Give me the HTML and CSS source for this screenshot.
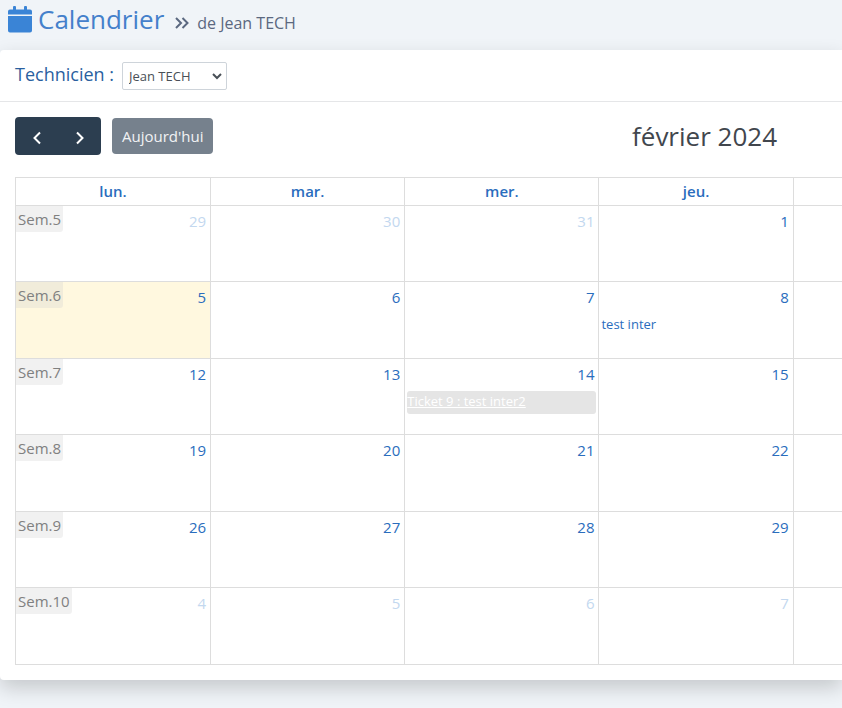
FILE: index.html
```html
<!DOCTYPE html>
<html lang="fr">
<head>
<meta charset="utf-8">
<meta name="viewport" content="width=device-width, initial-scale=1">
<title>Calendrier</title>
<link rel="stylesheet" href="styles.css">
</head>
<body>
<header class="page-header">
  <svg class="page-icon" viewBox="0 0 24 27" aria-hidden="true"><path d="M0 10h24v14.500a2 2 0 0 1-2 2H2a2 2 0 0 1-2-2zM0 8.500V5.500a2 2 0 0 1 2-2h3V1a1 1 0 0 1 1-1h1a1 1 0 0 1 1 1v2.500h8V1a1 1 0 0 1 1-1h1a1 1 0 0 1 1 1v2.500h3a2 2 0 0 1 2 2v3z"/></svg>
  <h1 class="page-title">Calendrier</h1>
  <svg class="page-chevrons" viewBox="0 0 14 12" aria-hidden="true"><path d="M1 1l5 5-5 5M7.500 1l5 5-5 5"/></svg>
  <span class="page-subtitle">de Jean TECH</span>
</header>
<main class="card">
  <form class="filter">
    <label class="filter-label" for="tech">Technicien :</label>
    <span class="select-wrap">
      <select class="filter-select" id="tech"><option>Jean TECH</option></select>
      <svg class="select-arrow" viewBox="0 0 10 7" aria-hidden="true"><path d="M1 1l4 4 4-4"/></svg>
    </span>
  </form>
  <section class="planner">
    <div class="toolbar">
      <div class="nav-group">
        <button class="nav-button" type="button" aria-label="Mois précédent"><svg viewBox="0 0 10 14" aria-hidden="true"><path d="M8 1.500L2.500 7 8 12.500"/></svg></button>
        <button class="nav-button" type="button" aria-label="Mois suivant"><svg viewBox="0 0 10 14" aria-hidden="true"><path d="M2 1.500L7.500 7 2 12.500"/></svg></button>
      </div>
      <button class="today-button" type="button" disabled>Aujourd'hui</button>
      <h2 class="month">février 2024</h2>
    </div>
    <table class="month-grid">
      <thead>
        <tr><th>lun.</th><th>mar.</th><th>mer.</th><th>jeu.</th><td class="rest"></td></tr>
      </thead>
      <tbody>
        <tr class="outside">
          <td><a class="week" href="#">Sem.5</a><a class="day" href="#">29</a></td>
          <td><a class="day" href="#">30</a></td>
          <td><a class="day" href="#">31</a></td>
          <td class="inside"><a class="day" href="#">1</a></td>
          <td class="rest"></td>
        </tr>
        <tr>
          <td class="today"><a class="week" href="#">Sem.6</a><a class="day" href="#">5</a></td>
          <td><a class="day" href="#">6</a></td>
          <td><a class="day" href="#">7</a></td>
          <td><a class="day" href="#">8</a><a class="event" href="#">test inter</a></td>
          <td class="rest"></td>
        </tr>
        <tr>
          <td><a class="week" href="#">Sem.7</a><a class="day" href="#">12</a></td>
          <td><a class="day" href="#">13</a></td>
          <td><a class="day" href="#">14</a><a class="event ticket" href="#">Ticket 9 : test inter2</a></td>
          <td><a class="day" href="#">15</a></td>
          <td class="rest"></td>
        </tr>
        <tr>
          <td><a class="week" href="#">Sem.8</a><a class="day" href="#">19</a></td>
          <td><a class="day" href="#">20</a></td>
          <td><a class="day" href="#">21</a></td>
          <td><a class="day" href="#">22</a></td>
          <td class="rest"></td>
        </tr>
        <tr>
          <td><a class="week" href="#">Sem.9</a><a class="day" href="#">26</a></td>
          <td><a class="day" href="#">27</a></td>
          <td><a class="day" href="#">28</a></td>
          <td><a class="day" href="#">29</a></td>
          <td class="rest"></td>
        </tr>
        <tr class="outside">
          <td><a class="week" href="#">Sem.10</a><a class="day" href="#">4</a></td>
          <td><a class="day" href="#">5</a></td>
          <td><a class="day" href="#">6</a></td>
          <td><a class="day" href="#">7</a></td>
          <td class="rest"></td>
        </tr>
      </tbody>
    </table>
  </section>
</main>
</body>
</html>
```
FILE: styles.css
```css
* { box-sizing: border-box; }

body {
  margin: 0;
  min-height: 100vh;
  background: #f0f4f8;
  color: #41464d;
  font-family: "Open Sans", sans-serif;
  font-size: 15px;
}

h1, h2 { margin: 0; font-weight: 400; }
a { color: #2a6dbd; text-decoration: none; }

.page-header {
  display: flex;
  align-items: center;
  height: 50px;
  padding: 0 8px 12px;
}
.page-icon { width: 24px; height: 27px; margin-right: 6px; fill: #3a84d6; }
.page-title { font-size: 26px; line-height: 38px; color: #4480cb; }
.page-chevrons {
  width: 14px;
  height: 12px;
  margin: 8px 8px 0 11px;
  fill: none;
  stroke: #5b6880;
  stroke-width: 2;
}
.page-subtitle { padding-top: 8px; font-size: 16px; line-height: 24px; color: #5b6880; }

.card {
  background: #fff;
  border-radius: 4px 0 0 4px;
  box-shadow: 0 8px 20px rgba(0, 0, 0, 0.18);
}

.filter {
  display: flex;
  align-items: center;
  height: 52px;
  padding-left: 15px;
  border-bottom: 1px solid #e5e6e8;
}
.filter-label { padding-bottom: 4px; margin-right: 8px; font-size: 18px; line-height: 24px; color: #2a5f9f; }
.select-wrap { position: relative; }
.filter-select {
  display: block;
  appearance: none;
  width: 105px;
  height: 28px;
  padding: 0 6px;
  border: 1px solid #ced4da;
  border-radius: 2px;
  background: #fff;
  color: #495057;
  font: 13px "Open Sans", sans-serif;
}
.select-arrow {
  position: absolute;
  top: 11px;
  right: 5px;
  width: 10px;
  height: 7px;
  fill: none;
  stroke: #495057;
  stroke-width: 2;
  pointer-events: none;
}

.planner { padding: 15px 0 15px 15px; }
.toolbar { display: flex; align-items: center; height: 38px; margin-bottom: 22px; }
.nav-group {
  display: flex;
  height: 38px;
  margin-right: 11px;
  border-radius: 4px;
  background: #2c3e50;
}
.nav-button { width: 43px; padding: 6px 0 0; border: 0; background: none; }
.nav-button svg { width: 10px; height: 14px; fill: none; stroke: #fff; stroke-width: 2; }
.today-button {
  height: 36px;
  padding: 0 10px;
  border: 0;
  border-radius: 4px;
  background: #76818d;
  color: #f1f2f4;
  font: 500 15px "Open Sans", sans-serif;
}
.month { margin-left: auto; padding-right: 65px; font-size: 26px; line-height: 38px; }

.month-grid { width: 100%; table-layout: fixed; border-collapse: collapse; }
.month-grid th, .month-grid td { border: 1px solid #ddd; padding: 0; }
.month-grid th { width: 23.5%; height: 28px; padding: 0 0 2px; font-weight: 600; font-size: 15px; line-height: 20px; color: #2a6dbd; }
.month-grid th:first-child { width: 23.6%; }
.month-grid .rest { border-right: 0; }
.month-grid tbody tr { height: 76px; }
.month-grid tbody tr:nth-child(even) { height: 77px; }
.month-grid tbody td { position: relative; vertical-align: top; }
.month-grid .today { background: #fff8df; }

.day { display: block; padding: 4px 4px 0; line-height: 22px; text-align: right; }
.outside td:not(.inside) .day { color: #c3d8ef; }
.week {
  position: absolute;
  top: 0;
  left: 0;
  padding: 2px;
  border-radius: 0 0 3px 0;
  background: rgba(208, 208, 208, 0.3);
  color: #808080;
  line-height: 22px;
}
.event {
  display: block;
  height: 23px;
  margin: 6px 2px 0;
  border-radius: 3px;
  font-size: 13px;
  line-height: 21px;
}
.ticket { background: #e5e5e5; color: #fff; text-decoration: underline; }
```
